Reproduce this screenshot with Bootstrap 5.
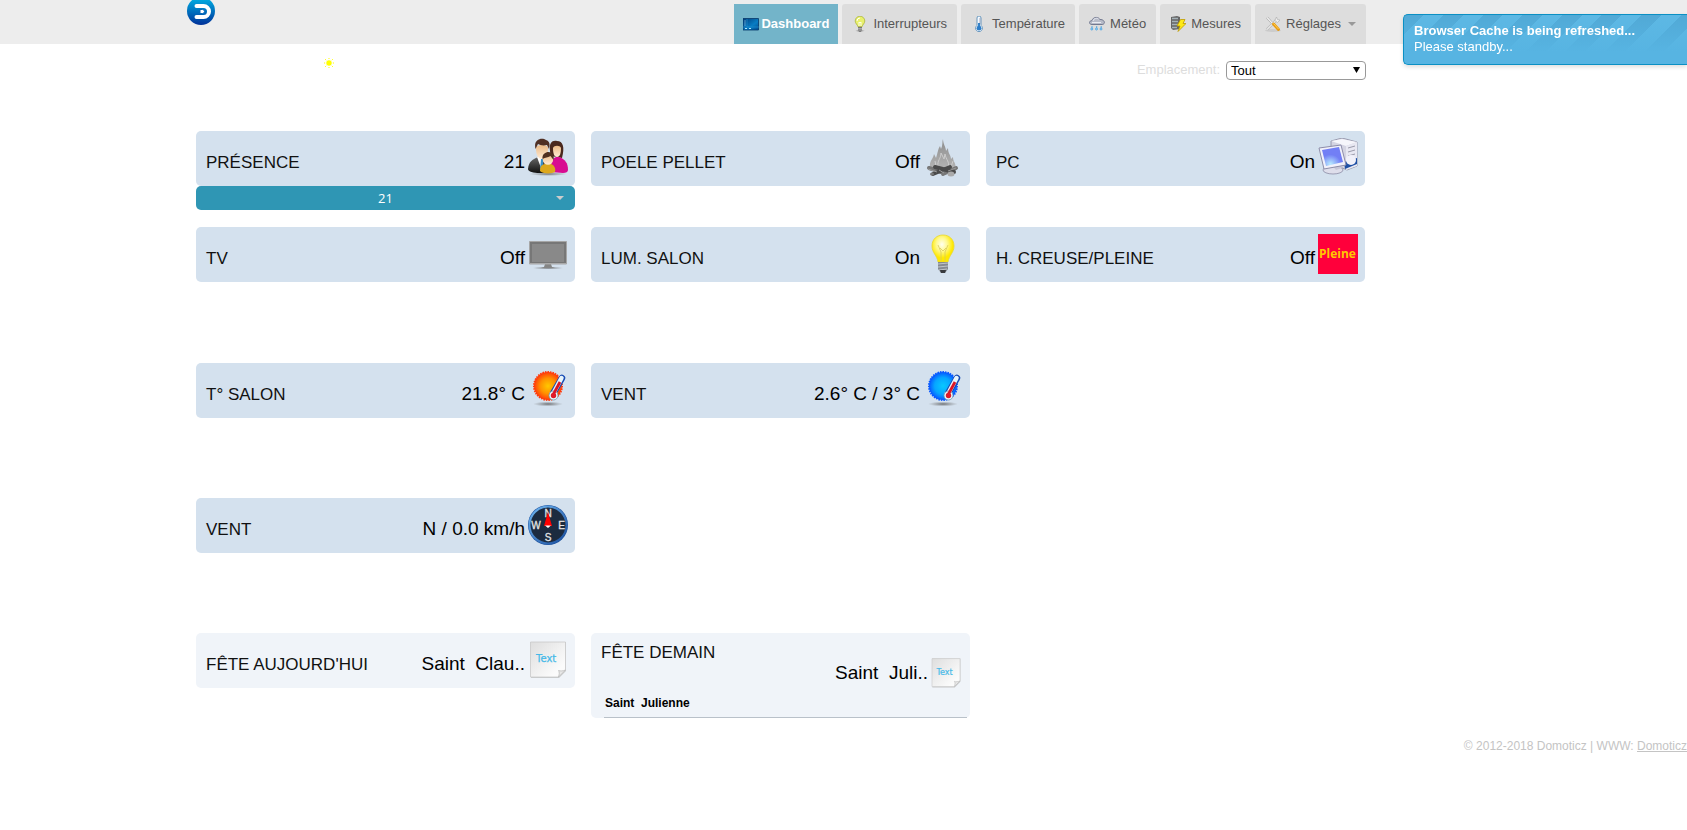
<!DOCTYPE html>
<html lang="fr">
<head>
<meta charset="utf-8">
<meta name="viewport" content="width=device-width, initial-scale=1">
<title>Domoticz</title>
<link href="https://cdn.jsdelivr.net/npm/bootstrap@5.3.0/dist/css/bootstrap.min.css" rel="stylesheet">
<style>
body{font-family:"Liberation Sans",Arial,sans-serif;font-size:13px;line-height:16px;color:#000;background:#fff;overflow-x:hidden}
.shell{max-width:1170px}
.topbar{background:#ededed}
.brand{margin-left:-9px}
.brand svg,.tabs svg,.tile svg,.sun svg{display:block;flex:none}
.tabs{gap:4px;padding-top:4px}
.tabs .nav-link{display:flex;align-items:center;gap:5px;height:40px;padding:0 10px;background:#ddd;color:#555;border-radius:3px 3px 0 0}
.tabs .nav-link.active{gap:2px;padding:0 9px;background:#73b4c9;color:#fff;font-weight:bold;border-radius:0}
.tri{border:4px solid transparent;border-top-color:#999;border-bottom:0;margin-left:2px}
.tools{padding-top:17px;height:87px}
.sun{margin:-3px 0 0 128px}
.place{gap:6px}
.place label{color:#ddd;padding-top:1px}
.place select{appearance:none;width:140px;height:19px;padding:0 4px;border:1px solid #999;border-radius:4px;background:#fff;color:#000;font-size:13px;line-height:16px}
.place .arrow{position:absolute;right:6px;top:6px;pointer-events:none}
.tiles{--bs-gutter-x:16px;row-gap:17px;margin-right:-7px;margin-bottom:80px}
.tiles:first-of-type{margin-bottom:81px}
.tile{display:flex;align-items:flex-start;height:55px;padding:7px 7px 0 10px;background:#d4e1ee;border-radius:5px}
.tile h2{font-size:17px;line-height:20px;margin:15px auto 0 0;font-weight:400;color:#111}
.tile output{font-size:19px;line-height:20px;margin:14px 3px 0 0;white-space:pre}
.pale{background:#f0f4f9}
.level{height:24px;border:0;border-radius:5px;background:#2f96b4;color:#fff;font:13px/24px "Open Sans",sans-serif;padding:0 11px 0 0;display:flex;width:100%;align-items:center}
.level span{flex:1;padding-left:19px}
.level i{border:4px solid transparent;border-top-color:#ccc;border-bottom:0}
.tall{display:block;height:85px;padding:10px 3px 0 10px}
.tall h2{margin:0}
.tall .val{height:30px;margin:-6px 5px 0 0}
.tall .val output{margin:6px 2px 0 0}
.tall p{margin:0 0 0 3px;padding:8px 1px 0;height:31px;font-size:12px;line-height:16px;font-weight:bold;white-space:pre;border-bottom:1px solid #b9c1c9}
.foot{font-size:12px;color:#c4c4c4;margin-top:-60px}
.foot a{color:#c4c4c4}
.note{position:fixed;top:14px;right:0;width:284px;height:51px;padding:8px 10px;color:#fff;border:1px solid #0b90c4;border-right:0;border-radius:5px 0 0 5px;background:linear-gradient(#57b4e200,#57b4e2 75%),repeating-linear-gradient(135deg,#51a9d6 0 14px,#5db8e4 14px 28px);box-shadow:0 2px 4px #0002;z-index:5}
@media(min-width:1400px){.wide{padding-right:125px}}
@media(max-width:991px){.tabs{flex-wrap:wrap}.sun{margin-left:20px}}
</style>
<script src="https://cdn.jsdelivr.net/npm/bootstrap@5.3.0/dist/js/bootstrap.bundle.min.js"></script>
</head>
<body>
<svg width="0" height="0" class="position-absolute" aria-hidden="true">
<defs>
<linearGradient id="gLogo" x1="0" y1="0" x2="0" y2="1"><stop offset="0" stop-color="#00b4e6"/><stop offset="1" stop-color="#003199"/></linearGradient>
<linearGradient id="gDash" x1="0" y1="0" x2="1" y2="1"><stop offset="0" stop-color="#003c7c"/><stop offset=".6" stop-color="#087dc4"/><stop offset="1" stop-color="#004a92"/></linearGradient>
<radialGradient id="gHot"><stop offset="0" stop-color="#ffc800"/><stop offset=".55" stop-color="#ff9200"/><stop offset="1" stop-color="#ff3b0c"/></radialGradient>
<radialGradient id="gCold"><stop offset="0" stop-color="#08c8ff"/><stop offset=".6" stop-color="#06a5ff"/><stop offset="1" stop-color="#0758ff"/></radialGradient>
<radialGradient id="gBulb" cx=".45" cy=".35"><stop offset="0" stop-color="#fffff0"/><stop offset=".5" stop-color="#fff98e"/><stop offset="1" stop-color="#ffe900"/></radialGradient>
<radialGradient id="gShade"><stop offset="0" stop-color="#555" stop-opacity=".8"/><stop offset="1" stop-color="#777" stop-opacity="0"/></radialGradient>
<linearGradient id="gSkin" x1="0" y1="0" x2="0" y2="1"><stop offset="0" stop-color="#ecba85"/><stop offset="1" stop-color="#ffebd5"/></linearGradient>
<linearGradient id="gSuit" x1="0" y1="0" x2="0" y2="1"><stop offset="0" stop-color="#686868"/><stop offset="1" stop-color="#111"/></linearGradient>
<linearGradient id="gNote" x1="0" y1="0" x2="1" y2="1"><stop offset="0" stop-color="#dedede"/><stop offset=".8" stop-color="#fbfbfb"/></linearGradient>
<linearGradient id="gFire" x1="0" y1="0" x2="0" y2="1"><stop offset="0" stop-color="#8c8c8c"/><stop offset="1" stop-color="#b4b4b4"/></linearGradient>
<radialGradient id="gScreen" cx=".4" cy=".9"><stop offset="0" stop-color="#b9ecff"/><stop offset="1" stop-color="#727ff5"/></radialGradient>
<linearGradient id="gRim" x1="0" y1="0" x2="1" y2="1"><stop offset="0" stop-color="#72b8f2"/><stop offset="1" stop-color="#174b9b"/></linearGradient>
<symbol id="thermo" viewBox="0 0 40 40">
<path d="M34 8 25 23.500" stroke="#164ab4" stroke-width="6.500" stroke-linecap="round"/>
<path d="M33.500 8 25.500 23" stroke="#e8f5fb" stroke-width="4.500" stroke-linecap="round"/>
<circle cx="25.500" cy="25.500" r="4.500" fill="#eaf6fa" stroke="#7098ac" stroke-width=".8"/>
<path d="M32 12 25.500 24" stroke="#dc1526" stroke-width="2.800"/><circle cx="25.500" cy="25.500" r="2.700" fill="#df1a29"/>
</symbol>
<symbol id="sheet" viewBox="0 0 40 40">
<path d="M3 2h35v29l-7 7H3z" fill="#aaa" opacity=".55"/><path d="M2.500 2h35v28l-7 7h-28z" fill="url(#gNote)" stroke="#c9c9c9" stroke-width=".8"/>
<path d="M30.500 37c1-3 1-5 0-6.500 2 .8 4.500.5 7-.5z" fill="#e8e8e8" stroke="#bbb" stroke-width=".8"/>
<text x="8" y="22" font-family="'DejaVu Sans', sans-serif" font-size="10" fill="#45b9e8" stroke="#45b9e8" stroke-width=".25">Text</text>
</symbol>
</defs>
</svg>

<header class="topbar wide">
<div class="container-fluid shell px-0 d-flex align-items-start">
<a class="brand" href="#" aria-label="Domoticz"><svg width="28" height="25" viewBox="0 3 28 25"><circle cx="14" cy="14" r="14" fill="url(#gLogo)"/><path d="M9.500 9h7a5.500 5.500 0 0 1 0 11h-7" fill="none" stroke="#fff" stroke-width="4" stroke-linecap="round"/><path d="M13 12.500h2.500a2 2 0 0 1 0 4H13z" fill="#fff" stroke="#0868b8" stroke-width="1"/></svg></a>
<ul class="nav tabs ms-auto flex-nowrap">
<li class="nav-item"><a class="nav-link active" href="#"><svg width="16" height="16" viewBox="0 0 16 16"><path d="M0 2.500h15.500v11.500H0z" fill="url(#gDash)"/><path d="M0 2.500h15.500v11.500H0z" fill="none" stroke="#06376a" stroke-width=".8"/><path d="M4 3v8M0 11h16" stroke="#2698d5" stroke-width=".6"/><path d="M1.500 5h1M1.500 7h1M1.500 9h1M2 12.500h2M6 12.500h2" stroke="#aee5ff"/></svg>Dashboard</a></li>
<li class="nav-item"><a class="nav-link" href="#"><svg width="16" height="16" viewBox="0 0 16 16"><ellipse cx="8" cy="14.800" rx="5" ry="1.200" fill="url(#gShade)"/><path d="M5.800 10.500C5.500 8.500 3.200 7.500 3.200 5a4.800 4.800 0 0 1 9.600 0c0 2.500-2.300 3.500-2.600 5.500z" fill="#e8f06c" stroke="#acb53f" stroke-width=".8"/><path d="M5 5a3 3 0 0 1 3-3" stroke="#fff" fill="none"/><path d="M7 10V6l1 1 1-1v4" fill="none" stroke="#fff" stroke-width=".8"/><path d="M6 11h4v3.500L8.500 16h-1L6 14.500z" fill="#777"/><path d="M6 12.500h4M6 14h4" stroke="#ddd" stroke-width=".5"/></svg>Interrupteurs</a></li>
<li class="nav-item"><a class="nav-link" href="#"><svg width="16" height="16" viewBox="0 0 16 16"><path d="M6 9.500V2a2 2 0 0 1 4 0v7.500a3.400 3.400 0 1 1-4 0z" fill="#f5faff" stroke="#6896bd"/><path d="M8 7v4" stroke="#3484cc" stroke-width="2"/><circle cx="8" cy="12.200" r="2.400" fill="#2c7dc7"/><path d="M8 3h1.500M8 5h1.500M8 7h1.500" stroke="#557" stroke-width=".5"/></svg>Température</a></li>
<li class="nav-item"><a class="nav-link" href="#"><svg width="16" height="16" viewBox="0 0 16 16"><path d="M3 8.500C-.5 8.500-.2 4.500 3 4.700 4 .2 10 .8 10.800 3.500c5-.3 6.200 4.800 2.200 5z" fill="#b8bcc9" stroke="#737990"/><path d="M4 5c1-3 4-3.500 5.500-2M3 6.500h9" fill="none" stroke="#e9ebf2"/><g fill="#b3dcf6" stroke="#3b9ce0" stroke-width=".8"><circle cx="2.800" cy="13" r="1"/><circle cx="7.500" cy="13" r="1"/><circle cx="12" cy="13" r="1"/></g><path d="M3 10v2M7.700 10v2M12.200 10v2" stroke="#3b9ce0" stroke-width=".8"/></svg>Météo</a></li>
<li class="nav-item"><a class="nav-link" href="#"><svg width="16" height="16" viewBox="0 0 16 16"><path d="M1 1 7 0l3 1v12l-7 1-2-2z" fill="#666"/><path d="M2 2.500h6M2 5.500h6M2 8.500h6M2 11.500h5" stroke="#a4b1b7" stroke-width="1.300"/><path d="M10.500 3.500h4.500l-2 4h3L8 15.500l2-5.500H7z" fill="#ffea16" stroke="#bd9b00" stroke-width=".8"/></svg>Mesures</a></li>
<li class="nav-item"><a class="nav-link" href="#"><svg width="16" height="16" viewBox="0 0 16 16"><ellipse cx="8" cy="14.500" rx="8" ry="1.500" fill="#ccc"/><path d="M2 13.500 11.500 4" stroke="#b4b4b4" stroke-width="2.600"/><path d="M2 13.500 11.500 4" stroke="#e8e8e8" stroke-width="1.400"/><path d="M9.800 4.500 11.500 1l1 2.500 2.500.5-2.500 2.500z" fill="#eee" stroke="#aaa" stroke-width=".6"/><path d="M2 1.500 8 8" stroke="#999" stroke-width="2.200"/><path d="M2 1.500 8 8" stroke="#f5f5f5" stroke-width="1.300"/><path d="M8.500 8 13.500 13.500" stroke="#e99b10" stroke-width="3" stroke-linecap="round"/><path d="M8.500 7.500 13.500 13" stroke="#ffd055" stroke-width="1"/></svg>Réglages<span class="tri"></span></a></li>
</ul>
</div>
</header>

<main class="wide">
<div class="container-fluid shell px-0">
<div class="tools d-flex align-items-start">
<div class="sun"><svg width="10" height="10" viewBox="0 0 10 10"><circle cx="5" cy="5" r="2.700" fill="#ff0"/><path d="M5 0v1M5 9v1M0 5h1.200M8.800 5H10M1.200 1.200l1 1M7.800 7.800l1 1M8.800 1.200l-1 1M1.200 8.800l1-1" stroke="#ff0"/></svg></div>
<div class="place ms-auto d-flex position-relative"><label for="room">Emplacement:</label><select id="room"><option>Tout</option></select><svg class="arrow" width="7" height="6" viewBox="0 0 7 6"><path d="M0 0h7L3.500 6z"/></svg></div>
</div>

<section class="row tiles">
<div class="col-lg-4"><div class="tile"><h2>PRÉSENCE</h2><output>21</output>
<svg width="40" height="40" viewBox="0 0 40 40"><ellipse cx="20" cy="36" rx="19" ry="2" fill="url(#gShade)"/><path d="M23 18c-3-12 0-16 6-15 6 0 8 6 5 17z" fill="#4a281d"/><path d="M23 34V22l5-3h3c6 2 9 6 9 13 0 2-2 3-5 3z" fill="#d80b91"/><path d="M25 10c1-3 7-3 8 0 0 5-1 9-4 9s-4-4-4-9z" fill="url(#gSkin)"/><path d="M0 31c1-8 4-9 10-12h6l7 5v9c-5 3-23 3-23-2z" fill="url(#gSuit)"/><path d="m9 19 4 11 4-11z" fill="#fff"/><path d="m13 21-1 10 3 3V21z" fill="#388ec8"/><path d="M8 10c0-4 12-4 12 0 0 7-2 11-6 11S8 17 8 10z" fill="url(#gSkin)"/><path d="M7.500 11C5 1 14-1 18 2c4 1 4 5 3 9l-2-4c-4 1-7 0-9-1z" fill="#503024"/><path d="M12 33c0-5 2-7 6-7h5c3 1 5 4 4 8-3 2-13 2-15-1z" fill="#dda71c"/><circle cx="20" cy="21.500" r="5.200" fill="url(#gSkin)"/><path d="M14.500 21c-.5-5 3-7 6-7 4 0 6 3 5 8l-3-4c-3 2-5 1-8 3z" fill="#503020"/></svg></div>
<button class="level" type="button"><span>21</span><i></i></button></div>
<div class="col-lg-4"><div class="tile"><h2>POELE PELLET</h2><output>Off</output>
<svg width="40" height="40" viewBox="0 0 40 40"><path d="M7 30c-1-8 3-8 4-14l2 4c2-6 2-9 4-12l1 3c2-4 1-7 2-10 0 5 3 8 3 12l2-3c0 6 3 7 3 11l2-2c0 6 4 6 2 12z" fill="url(#gFire)"/><path d="M15 29c-1-7 3-8 3-14l3 6 1-5c1 6 5 8 3 13M12 23l1 5M30 23l-2 6" stroke="#ccc" fill="none"/><g fill="none" stroke-linecap="round" stroke-width="4"><path d="m6 30 12 4M33 30 20 36" stroke="#777"/><path d="m12 29 19 5M27 29 10 36" stroke="#4b4b4b"/></g><path d="m5 31 9 3M16 32l5 3M25 33l8-3" stroke="#999"/><ellipse cx="28" cy="36" rx="3.500" ry="2.500" fill="#aaa"/><ellipse cx="9" cy="36" rx="2" ry="1.500" fill="#777"/></svg></div></div>
<div class="col-lg-4"><div class="tile"><h2>PC</h2><output>On</output>
<svg width="40" height="40" viewBox="0 0 40 40"><path d="m13 3 11-3 15 4v24l-10 4-16-7z" fill="#d4d4e2" stroke="#8b8ba1" stroke-width=".8"/><path d="m13 3 15 5 11-4L24 1z" fill="#f6f6fb"/><path d="m28 8 11-4v24l-11 4z" fill="#e8e8f2"/><path d="m30 10 7-2M30 14l7-2M30 18l7-2" stroke="#9b9bab"/><path d="m26 24 13-4v6l-12 5z" fill="#1d4fa4"/><circle cx="33" cy="22" r="5" fill="#f1f1fa"/><ellipse cx="15" cy="32" rx="10" ry="4" fill="#dedeeb" stroke="#8c8ca5" stroke-width=".8"/><path d="m13 26 9-1 2 5-6 2z" fill="#c7c7d8"/><path d="m1 10 22-3 5 20-22 4z" fill="#f1f1fb" stroke="#8d8da9"/><path d="m4 12 17-3 4 15-17 4z" fill="url(#gScreen)"/></svg></div></div>
<div class="col-lg-4"><div class="tile"><h2>TV</h2><output>Off</output>
<svg width="40" height="40" viewBox="0 0 40 40"><ellipse cx="20" cy="34" rx="16" ry="1.500" fill="url(#gShade)"/><path d="M17 30h6l1 3 3 1H13l3-1z" fill="#858585"/><path d="M1.500 7.500h37V30h-37z" fill="#777" stroke="#a6a6a6"/><path d="M4 10h32v18H4z" fill="#898989"/><path d="M2 29.500h36" stroke="#aaa"/></svg></div></div>
<div class="col-lg-4"><div class="tile"><h2>LUM. SALON</h2><output>On</output>
<svg width="40" height="40" viewBox="0 0 40 40"><path d="M15 28c-1-7-6-9-6-16C9 5 14 1 20 1s11 4 11 11c0 7-5 9-6 16z" fill="url(#gBulb)" stroke="#e8d730" stroke-width=".8"/><path d="m15 11 3 7v9M25 11l-3 7v9M17 14l3 3 3-3" fill="none" stroke="#d8c95c" stroke-width=".8"/><path d="M15 28h10v7l-3 4h-4l-3-4z" fill="#858a91"/><path d="M15 30l10-1M15 33l10-1M16 36l8-1" stroke="#c1c5ca" stroke-width="1"/><path d="M17 36h6l-1 3h-4z" fill="#383a3d"/></svg></div></div>
<div class="col-lg-4"><div class="tile"><h2>H. CREUSE/PLEINE</h2><output>Off</output>
<svg width="40" height="40" viewBox="0 0 40 40"><path d="M0 0h40v40H0z" fill="#ff003b"/><text x="1" y="24" font-family="'Open Sans', sans-serif" font-weight="bold" font-size="12" fill="#ffc800">Pleine</text></svg></div></div>
</section>

<section class="row tiles">
<div class="col-lg-4"><div class="tile"><h2>T° SALON</h2><output>21.8° C</output>
<svg width="40" height="40" viewBox="0 0 40 40"><ellipse cx="20" cy="34" rx="15" ry="2.500" fill="url(#gShade)"/><circle cx="20" cy="16" r="14" fill="url(#gHot)" stroke="#ff3b0c" stroke-width="2" stroke-dasharray="1.500 1"/><use href="#thermo"/></svg></div></div>
<div class="col-lg-4"><div class="tile"><h2>VENT</h2><output>2.6° C / 3° C</output>
<svg width="40" height="40" viewBox="0 0 40 40"><ellipse cx="20" cy="34" rx="15" ry="2.500" fill="url(#gShade)"/><circle cx="20" cy="16" r="14" fill="url(#gCold)" stroke="#0758ff" stroke-width="2" stroke-dasharray="1.500 1"/><use href="#thermo"/></svg></div></div>
</section>

<section class="row tiles">
<div class="col-lg-4"><div class="tile"><h2>VENT</h2><output>N / 0.0 km/h</output>
<svg width="40" height="40" viewBox="0 0 40 40"><circle cx="20" cy="20" r="20" fill="#1c519f"/><circle cx="20" cy="20" r="18.500" fill="#1c2b3f" stroke="url(#gRim)" stroke-width="2"/><g font-family="'Liberation Sans', sans-serif" font-size="10" fill="#e5e5e5" stroke="#e5e5e5" stroke-width=".3" text-anchor="middle"><text x="20" y="12">N</text><text x="8" y="24">W</text><text x="33.500" y="24">E</text><text x="20" y="36">S</text></g><path d="m20 7 4 14h-8z" fill="#f00"/><path d="M17 20.500h6L20 23z" fill="#fff"/></svg></div></div>
</section>

<section class="row tiles">
<div class="col-lg-4"><div class="tile pale"><h2>FÊTE AUJOURD'HUI</h2><output>Saint  Clau..</output>
<svg width="40" height="40"><use href="#sheet"/></svg></div></div>
<div class="col-lg-4"><div class="tile tall pale"><h2>FÊTE DEMAIN</h2><div class="val d-flex justify-content-end"><output>Saint  Juli..</output><svg width="32" height="32"><use href="#sheet"/></svg></div><p>Saint  Julienne</p></div></div>
</section>
</div>
</main>
<footer class="foot text-end">© 2012-2018 Domoticz | WWW: <a href="#">Domoticz</a></footer>
<div class="note" role="status"><strong>Browser Cache is being refreshed...</strong><br>Please standby...</div>
</body>
</html>
